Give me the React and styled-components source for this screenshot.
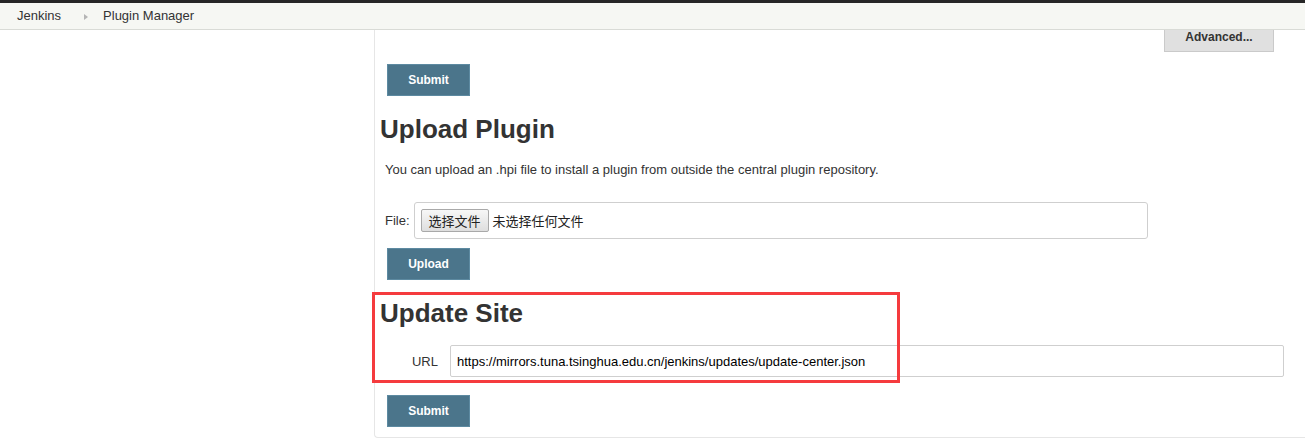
import React from 'react';
import styled, { createGlobalStyle } from 'styled-components';

const GlobalStyle = createGlobalStyle`
  body {
    margin: 0;
    background: #fff;
    color: #333;
    font-family: "Liberation Sans", Arial, "Noto Sans CJK SC", sans-serif;
    font-size: 13px;
  }
`;

const TopBar = styled.div`
  height: 3px;
  background: #262626;
`;

const Breadcrumbs = styled.div`
  display: flex;
  align-items: center;
  height: 26px;
  padding-left: 17px;
  background: #f6f7f3;
  border-bottom: 1px solid #d9dbd6;
  font-size: 13px;
  color: #333;
`;

const Crumb = styled.span`
  line-height: 16px;
`;

const Arrow = styled.span`
  display: inline-block;
  width: 0;
  height: 0;
  margin: 1px 15px 0 23px;
  border-left: 4px solid #b5b5b5;
  border-top: 3px solid transparent;
  border-bottom: 3px solid transparent;
`;

const Main = styled.div`
  display: flex;
`;

const SidePanel = styled.div`
  width: 374px;
  flex-shrink: 0;
`;

const Panel = styled.div`
  flex: 1;
  display: flex;
  flex-direction: column;
  align-items: flex-start;
  padding: 0 21px 10px 0;
  border-left: 1px solid #e6e6e6;
  border-bottom: 1px solid #e6e6e6;
  border-bottom-left-radius: 4px;
`;

const AdvancedRow = styled.div`
  align-self: stretch;
  display: flex;
  justify-content: flex-end;
  padding-right: 10px;
`;

const AdvancedButton = styled.button`
  width: 110px;
  height: 22px;
  padding: 0;
  display: flex;
  justify-content: center;
  align-items: flex-start;
  border: 1px solid #cacaca;
  border-top: none;
  background: #e0e0e0;
  color: #333;
  font-family: inherit;
  font-weight: bold;
  font-size: 12px;
  line-height: 14px;
`;

const PrimaryButton = styled.button`
  width: 83px;
  height: 32px;
  margin: ${(p) => p.$top}px 0 0 12px;
  padding: 0;
  border: 1px solid #5d8aa1;
  background: #4b758b;
  color: #fff;
  font-family: inherit;
  font-weight: bold;
  font-size: 12px;
`;

const Heading = styled.h1`
  margin: ${(p) => p.$top}px 0 0 5px;
  font-size: 26px;
  line-height: 30px;
  font-weight: bold;
  color: #333;
`;

const Description = styled.p`
  margin: 18px 0 0 10px;
  line-height: 16px;
`;

const FileRow = styled.div`
  display: flex;
  align-items: center;
  margin-top: 24px;
  padding-left: 10px;
`;

const FileBox = styled.div`
  box-sizing: border-box;
  width: 734px;
  height: 37px;
  margin-left: 4px;
  padding-left: 6px;
  display: flex;
  align-items: center;
  border: 1px solid #cfcfcf;
  border-radius: 3px;
  font-family: "Noto Sans CJK SC", sans-serif;
  font-size: 13px;
`;

const FileButton = styled.span`
  box-sizing: border-box;
  height: 23px;
  padding: 0 7px;
  display: flex;
  align-items: center;
  border: 1px solid #a9a9a9;
  border-radius: 2px;
  background: linear-gradient(#f7f7f7, #dedede);
  color: #222;
`;

const FileStatus = styled.span`
  margin-left: 4px;
  color: #222;
`;

const Section = styled.div`
  position: relative;
  align-self: stretch;
  margin-top: 18px;
`;

const Highlight = styled.div`
  position: absolute;
  top: -6px;
  left: -3px;
  width: 528px;
  height: 91px;
  box-sizing: border-box;
  border: 3px solid #f53b3e;
  pointer-events: none;
`;

const UrlRow = styled.div`
  display: flex;
  align-items: center;
  margin-top: 17px;
  padding-left: 10px;
`;

const UrlLabel = styled.label`
  width: 53px;
  text-align: right;
  color: #333;
`;

const UrlInput = styled.div`
  box-sizing: border-box;
  flex: 1;
  height: 32px;
  margin-left: 12px;
  padding-left: 6px;
  display: flex;
  align-items: center;
  border: 1px solid #cfcfcf;
  border-radius: 2px;
  color: #000;
  font-size: 13px;
`;

export default function App() {
  return (
    <>
      <GlobalStyle />
      <TopBar />
      <Breadcrumbs>
        <Crumb>Jenkins</Crumb>
        <Arrow />
        <Crumb>Plugin Manager</Crumb>
      </Breadcrumbs>
      <Main>
        <SidePanel />
        <Panel>
          <AdvancedRow>
            <AdvancedButton>Advanced...</AdvancedButton>
          </AdvancedRow>
          <PrimaryButton $top={12}>Submit</PrimaryButton>

          <Heading $top={18}>Upload Plugin</Heading>
          <Description>
            You can upload an .hpi file to install a plugin from outside the central plugin repository.
          </Description>
          <FileRow>
            <span>File:</span>
            <FileBox>
              <FileButton>选择文件</FileButton>
              <FileStatus>未选择任何文件</FileStatus>
            </FileBox>
          </FileRow>
          <PrimaryButton $top={9}>Upload</PrimaryButton>

          <Section>
            <Highlight />
            <Heading $top={0}>Update Site</Heading>
            <UrlRow>
              <UrlLabel>URL</UrlLabel>
              <UrlInput>https://mirrors.tuna.tsinghua.edu.cn/jenkins/updates/update-center.json</UrlInput>
            </UrlRow>
          </Section>
          <PrimaryButton $top={18}>Submit</PrimaryButton>
        </Panel>
      </Main>
    </>
  );
}
